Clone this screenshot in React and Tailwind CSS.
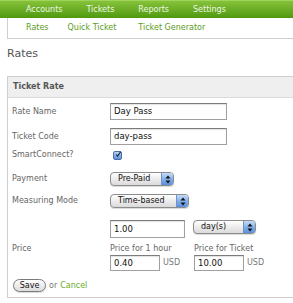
import React from "react";

/* ================= SMALL PARTS ================= */

const Arrows = () => (
  <svg width="6" height="9" viewBox="0 0 6 9">
    <path d="M3 0.5 L5.5 3.5 L0.5 3.5 Z" fill="#111" />
    <path d="M3 8.5 L5.5 5.5 L0.5 5.5 Z" fill="#111" />
  </svg>
);

// mac style popup button
const Select = ({ label, w }) => (
  <div
    className={`flex h-[14px] ${w} items-stretch overflow-hidden rounded-[4px] border border-[#8c8c8c] bg-linear-to-b from-white to-[#dadada] shadow-[0_1px_1px_rgba(0,0,0,0.15)]`}
  >
    <span className="flex-1 pl-[7px] text-[8px] leading-[12px] text-[#111]">{label}</span>
    <span className="flex w-[12px] items-center justify-center border-l border-[#6f93c8] bg-linear-to-b from-[#c4dcf7] via-[#86b0ea] to-[#5a8fdc]">
      <Arrows />
    </span>
  </div>
);

const Field = ({ value, w, h = "h-[17px]" }) => (
  <div
    className={`${h} ${w} flex items-center border border-[#a0a0a0] border-t-[#7c7c7c] bg-white pl-[3px] text-[8.5px] text-[#111] shadow-[inset_0_1px_1px_rgba(0,0,0,0.12)]`}
  >
    {value}
  </div>
);

const Label = ({ children }) => (
  <span className="w-[98px] shrink-0 text-[8px] text-[#666]">{children}</span>
);

/* ================= PAGE ================= */

export default function App() {
  const nav = ["Accounts", "Tickets", "Reports", "Settings"];

  return (
    <div className="h-[303px] w-[293px] overflow-hidden bg-white font-['DejaVu_Sans',sans-serif]">
      {/* TOP NAV */}
      <div className="flex h-[18px] items-center gap-6 border-t border-[#9fd45a] bg-linear-to-b from-[#86c23a] to-[#4f990c] pl-[26px]">
        {nav.map((n) => (
          <span key={n} className="text-[8px] text-[#eef7e2]">
            {n}
          </span>
        ))}
      </div>

      {/* SUB NAV */}
      <div className="ml-[7px] flex h-[21px] w-[300px] items-center border-b border-l border-[#cfcfcf] pl-[18px] text-[8px] text-[#5c9c1e]">
        <span>Rates</span>
        <span className="ml-[19px]">Quick Ticket</span>
        <span className="ml-[22px]">Ticket Generator</span>
      </div>

      {/* TITLE */}
      <h1 className="ml-[7px] mt-[8px] text-[11px] leading-[14px] text-[#555]">Rates</h1>

      {/* PANEL */}
      <div className="ml-[7px] mt-[15px] w-[300px] border border-[#cfcfcf]">
        <div className="flex h-[21px] items-center border-b border-[#dcdcdc] bg-[#efefef] pl-[5px] text-[8px] font-bold text-[#555]">
          Ticket Rate
        </div>

        <div className="flex flex-col pb-[5px] pl-[4px]">
          <div className="mt-[5px] flex h-[17px] items-center">
            <Label>Rate Name</Label>
            <Field value="Day Pass" w="w-[117px]" />
          </div>

          <div className="mt-[8px] flex h-[17px] items-center">
            <Label>Ticket Code</Label>
            <Field value="day-pass" w="w-[117px]" />
          </div>

          <div className="mt-[5px] flex h-[10px] items-center">
            <Label>SmartConnect?</Label>
            <span className="ml-[3px] flex h-[9px] w-[9px] items-center justify-center rounded-[2px] border border-[#4a6fa8] bg-linear-to-b from-[#b9d3f4] to-[#5d8fd6]">
              <svg width="9" height="9" viewBox="0 0 9 9" className="-mt-[2px] ml-[1px]">
                <path d="M1.5 4.5 L3.8 7 L8.5 0.5" stroke="#10233f" strokeWidth="1.6" fill="none" />
              </svg>
            </span>
          </div>

          <div className="mt-[12px] flex h-[14px] items-center">
            <Label>Payment</Label>
            <Select label="Pre-Paid" w="w-[64px]" />
          </div>

          <div className="mt-[8px] flex h-[14px] items-center">
            <Label>Measuring Mode</Label>
            <Select label="Time-based" w="w-[79px]" />
          </div>

          <div className="mt-[12px] flex items-start">
            <Label />
            <Field value="1.00" w="w-[75px]" h="h-[18px]" />
            <div className="ml-[8px]">
              <Select label="day(s)" w="w-[63px]" />
            </div>
          </div>

          <div className="mt-[5px] flex items-start">
            <span className="w-[98px] shrink-0 text-[8px] leading-[11px] text-[#666]">Price</span>
            <div className="flex w-[84px] flex-col">
              <span className="text-[8px] leading-[11px] text-[#666]">Price for 1 hour</span>
              <div className="mt-[1px] flex items-center">
                <Field value="0.40" w="w-[50px]" h="h-[16px]" />
                <span className="ml-[3px] text-[8px] text-[#777]">USD</span>
              </div>
            </div>
            <div className="flex flex-col">
              <span className="text-[8px] leading-[11px] text-[#666]">Price for Ticket</span>
              <div className="mt-[1px] flex items-center">
                <Field value="10.00" w="w-[50px]" h="h-[16px]" />
                <span className="ml-[3px] text-[8px] text-[#777]">USD</span>
              </div>
            </div>
          </div>

          <div className="mt-[8px] flex h-[13px] items-center pl-[1px]">
            <span className="flex h-[13px] w-[33px] items-center justify-center rounded-full border border-[#7a7a7a] bg-linear-to-b from-white to-[#dcdcdc] text-[8px] text-[#111] shadow-[0_1px_1px_rgba(0,0,0,0.15)]">
              Save
            </span>
            <span className="ml-[3px] text-[8px] text-[#777]">or</span>
            <span className="ml-[3px] text-[8px] text-[#6aaa2a]">Cancel</span>
          </div>
        </div>
      </div>
    </div>
  );
}
